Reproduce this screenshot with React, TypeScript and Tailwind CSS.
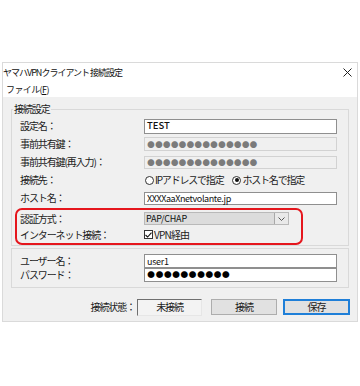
import React from "react";

const jp = "font-['Noto_Sans_CJK_JP','Noto_Sans',sans-serif]";

function Label({ text, w = "w-[132px]", pl = "pl-[8px]" }: { text: string; w?: string; pl?: string }) {
  return (
    <div className={`${w} ${pl} shrink-0 text-[10px] leading-none tracking-[-1.1px] text-[#1b1b1b]`}>
      {text}
    </div>
  );
}

function TextBox({ children, disabled = false, h = "h-[15px]" }: { children: React.ReactNode; disabled?: boolean; h?: string }) {
  return (
    <div
      className={`${h} w-[193px] flex items-center pl-[2px] border ${
        disabled ? "border-[#d2d2d2] bg-[#f0f0f0]" : "border-[#8f8f8f] bg-white"
      }`}
    >
      {children}
    </div>
  );
}

// masked password, one fixed-width cell per dot
function Dots({ n, cell, className }: { n: number; cell: string; className: string }) {
  return (
    <span className={`flex leading-none ${className}`}>
      {Array.from({ length: n }).map((_, i) => (
        <span key={i} className={`${cell} inline-flex justify-center`}>
          ●
        </span>
      ))}
    </span>
  );
}

function Radio({ checked, text }: { checked: boolean; text: string }) {
  return (
    <div className="flex items-center gap-[1px]">
      <span className="w-[9px] h-[9px] rounded-full border border-[#333] bg-white flex items-center justify-center">
        {checked && <span className="w-[4px] h-[4px] rounded-full bg-[#111]" />}
      </span>
      <span className="text-[10px] leading-none tracking-[-1.2px] text-[#1b1b1b]">{text}</span>
    </div>
  );
}

export default function App() {
  return (
    <div className={`w-[360px] h-[386px] bg-white pt-[62px] pl-[2px] ${jp}`}>
      <div className="w-[356px] h-[260px] border border-[#dadada] bg-[#f0f0f0] flex flex-col">
        {/* title bar */}
        <div className="h-[18px] bg-white flex items-center justify-between pr-[5px]">
          <span className="text-[9px] leading-none tracking-[-1px] text-[#111] whitespace-pre">ヤマハVPNクライアント 接続設定</span>
          <svg width="9" height="9" viewBox="0 0 9 9">
            <path d="M0.5 0.5 L8.5 8.5 M8.5 0.5 L0.5 8.5" stroke="#222" strokeWidth="1" />
          </svg>
        </div>
        {/* menu bar */}
        <div className="h-[16px] bg-white flex items-center pl-[3px]">
          <span className="text-[9px] leading-none tracking-[-0.6px] text-[#111]">
            ファイル(<span className="underline">F</span>)
          </span>
        </div>

        {/* connection settings group */}
        <fieldset className="mt-[6px] ml-[8px] w-[338px] border border-[#d9d9d9] px-0 pt-[2px] pb-0 m-0">
          <legend className="ml-[1px] px-[1px] h-[12px] flex items-center text-[10px] leading-none tracking-[-1.1px] text-[#1b1b1b]">
            接続設定
          </legend>

          <div className="h-[18px] flex items-center">
            <Label text="設定名：" />
            <TextBox>
              <span className="text-[9.5px] leading-none font-medium text-[#111]">TEST</span>
            </TextBox>
          </div>
          <div className="h-[18px] flex items-center">
            <Label text="事前共有鍵：" />
            <TextBox disabled h="h-[14px]">
              <Dots n={14} cell="w-[7.9px]" className="text-[7.4px] text-[#7b7b7b]" />
            </TextBox>
          </div>
          <div className="h-[18px] flex items-center">
            <Label text="事前共有鍵(再入力)：" />
            <TextBox disabled h="h-[13px]">
              <Dots n={14} cell="w-[7.9px]" className="text-[7.4px] text-[#7b7b7b]" />
            </TextBox>
          </div>
          <div className="h-[18px] flex items-center">
            <Label text="接続先：" />
            <div className="flex items-center gap-[9px] pl-[1px]">
              <Radio checked={false} text="IPアドレスで指定" />
              <Radio checked text="ホスト名で指定" />
            </div>
          </div>
          <div className="h-[18px] flex items-center">
            <Label text="ホスト名：" />
            <TextBox h="h-[13px]">
              <span className="text-[9px] leading-none tracking-[-0.4px] text-[#111]">XXXXaaXnetvolante.jp</span>
            </TextBox>
          </div>

          {/* highlighted rows */}
          <div className="mt-[1px] ml-[3px] w-[288px] h-[37px] border-2 border-[#e5161d] rounded-[7px] flex flex-col pt-[1px]">
            <div className="h-[15px] flex items-center">
              <Label text="認証方式：" w="w-[127px]" pl="pl-[3px]" />
              <div className="w-[145px] h-[13px] flex border border-[#b9b9b9] bg-[#e9e9e9]">
                <div className="w-[130px] h-full bg-[#dcdcdc] border-r border-[#a8a8a8] flex items-center pl-[1px]">
                  <span className="text-[9px] leading-none tracking-[-0.2px] text-[#111]">PAP/CHAP</span>
                </div>
                <div className="flex-1 flex items-center justify-center">
                  <svg width="7" height="4" viewBox="0 0 7 4">
                    <path d="M0.5 0.5 L3.5 3.5 L6.5 0.5" stroke="#555" strokeWidth="1" fill="none" />
                  </svg>
                </div>
              </div>
            </div>
            <div className="h-[17px] flex items-center">
              <Label text="インターネット接続：" w="w-[127px]" pl="pl-[3px]" />
              <div className="flex items-center gap-[1px]">
                <span className="w-[9px] h-[9px] border border-[#333] bg-white flex items-center justify-center">
                  <svg width="7" height="6" viewBox="0 0 7 6">
                    <path d="M0.5 3 L2.6 5 L6.5 0.6" stroke="#111" strokeWidth="1.1" fill="none" />
                  </svg>
                </span>
                <span className="text-[10px] leading-none tracking-[-0.8px] text-[#1b1b1b]">VPN経由</span>
              </div>
            </div>
          </div>
        </fieldset>

        {/* user group */}
        <div className="mt-[2px] ml-[8px] w-[338px] border border-[#d9d9d9] pt-[5px] pb-[5px]">
          <div className="h-[14px] flex items-center">
            <Label text="ユーザー名：" />
            <TextBox h="h-[14px]">
              <span className="text-[9px] leading-none tracking-[-0.3px] text-[#111]">user1</span>
            </TextBox>
          </div>
          <div className="h-[14px] flex items-center">
            <Label text="パスワード：" />
            <TextBox h="h-[14px]">
              <Dots n={10} cell="w-[8.3px]" className="text-[7.6px] text-[#000]" />
            </TextBox>
          </div>
        </div>

        {/* status / buttons */}
        <div className="mt-[11px] h-[16px] flex items-center justify-end pr-[7px]">
          <span className="mr-[2px] text-[10px] leading-none tracking-[-1.1px] text-[#1b1b1b]">接続状態：</span>
          <div className="w-[65px] h-[17px] border-t border-l border-[#6f6f6f] border-r border-b border-r-[#e6e6e6] border-b-[#e6e6e6] bg-[#f3f3f3] flex items-center justify-center">
            <span className="text-[10px] leading-none tracking-[-1.1px] text-[#1b1b1b]">未接続</span>
          </div>
          <div className="ml-[9px] w-[66px] h-[16px] border border-[#adadad] bg-[#e1e1e1] flex items-center justify-center">
            <span className="text-[10px] leading-none tracking-[-1.1px] text-[#1b1b1b]">接続</span>
          </div>
          <div className="ml-[6px] w-[67px] h-[16px] border-2 border-[#1f7fd8] bg-[#e1e1e1] flex items-center justify-center">
            <span className="text-[10px] leading-none tracking-[-1.1px] text-[#1b1b1b]">保存</span>
          </div>
        </div>
      </div>
    </div>
  );
}
